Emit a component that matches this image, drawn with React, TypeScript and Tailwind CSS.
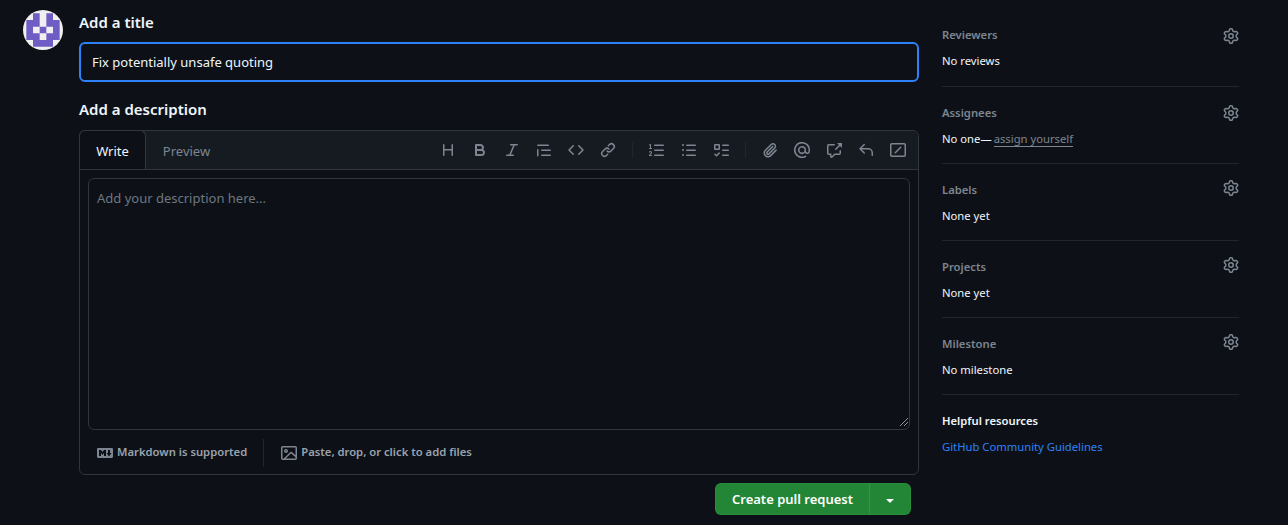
const OCTICONS: Record<string, string> = {
	heading: "M3.75 2a.75.75 0 0 1 .75.75V7h7V2.75a.75.75 0 0 1 1.5 0v10.5a.75.75 0 0 1-1.5 0V8.5h-7v4.75a.75.75 0 0 1-1.5 0V2.75A.75.75 0 0 1 3.75 2Z",
	bold: "M4 2h4.5a3.501 3.501 0 0 1 2.852 5.53A3.499 3.499 0 0 1 9.5 14H4a1 1 0 0 1-1-1V3a1 1 0 0 1 1-1Zm1 7v3h4.5a1.5 1.5 0 0 0 0-3Zm3.5-2a1.5 1.5 0 0 0 0-3H5v3Z",
	italic: "M6 2.75A.75.75 0 0 1 6.75 2h6.5a.75.75 0 0 1 0 1.5h-2.505l-3.858 9H9.25a.75.75 0 0 1 0 1.5h-6.5a.75.75 0 0 1 0-1.5h2.505l3.858-9H6.75A.75.75 0 0 1 6 2.75Z",
	quote: "M1.75 2.5h10.5a.75.75 0 0 1 0 1.5H1.75a.75.75 0 0 1 0-1.5Zm4 5h8.5a.75.75 0 0 1 0 1.5h-8.5a.75.75 0 0 1 0-1.5Zm0 5h8.5a.75.75 0 0 1 0 1.5h-8.5a.75.75 0 0 1 0-1.5ZM2.5 7.75v6a.75.75 0 0 1-1.5 0v-6a.75.75 0 0 1 1.5 0Z",
	code: "m11.28 3.22 4.25 4.25a.75.75 0 0 1 0 1.06l-4.25 4.25a.749.749 0 0 1-1.275-.326.749.749 0 0 1 .215-.734L13.94 8l-3.72-3.72a.749.749 0 0 1 .326-1.275.749.749 0 0 1 .734.215Zm-6.56 0a.751.751 0 0 1 1.042.018.751.751 0 0 1 .018 1.042L2.06 8l3.72 3.72a.749.749 0 0 1-.326 1.275.749.749 0 0 1-.734-.215L.47 8.53a.75.75 0 0 1 0-1.06Z",
	link: "m7.775 3.275 1.25-1.25a3.5 3.5 0 1 1 4.95 4.95l-2.5 2.5a3.5 3.5 0 0 1-4.95 0 .751.751 0 0 1 .018-1.042.751.751 0 0 1 1.042-.018 1.998 1.998 0 0 0 2.83 0l2.5-2.5a2.002 2.002 0 0 0-2.83-2.83l-1.25 1.25a.751.751 0 0 1-1.042-.018.751.751 0 0 1-.018-1.042Zm-4.69 9.64a1.998 1.998 0 0 0 2.83 0l1.25-1.25a.751.751 0 0 1 1.042.018.751.751 0 0 1 .018 1.042l-1.25 1.25a3.5 3.5 0 1 1-4.95-4.95l2.5-2.5a3.5 3.5 0 0 1 4.95 0 .751.751 0 0 1-.018 1.042.751.751 0 0 1-1.042.018 1.998 1.998 0 0 0-2.83 0l-2.5 2.5a1.998 1.998 0 0 0 0 2.83Z",
	listOrdered: "M5 3.25a.75.75 0 0 1 .75-.75h8.5a.75.75 0 0 1 0 1.5h-8.5A.75.75 0 0 1 5 3.25Zm0 5a.75.75 0 0 1 .75-.75h8.5a.75.75 0 0 1 0 1.5h-8.5A.75.75 0 0 1 5 8.25Zm0 5a.75.75 0 0 1 .75-.75h8.5a.75.75 0 0 1 0 1.5h-8.5a.75.75 0 0 1-.75-.75ZM2.003 2.5a.5.5 0 0 0-.723-.447l-1.003.5a.5.5 0 0 0 .446.895l.28-.14V6H.5a.5.5 0 0 0 0 1h2.006a.5.5 0 1 0 0-1h-.503ZM.924 10.32a.5.5 0 0 1-.851-.525l.001-.001.001-.002.002-.004.007-.011c.097-.144.215-.273.348-.384.228-.19.588-.392 1.068-.392.468 0 .858.181 1.126.484.259.294.377.673.377 1.038 0 .987-.686 1.495-1.156 1.845l-.047.035c-.303.225-.522.4-.654.597h1.357a.5.5 0 0 1 0 1H.5a.5.5 0 0 1-.5-.5c0-1.005.692-1.52 1.167-1.875l.035-.025c.531-.396.8-.625.8-1.078a.57.57 0 0 0-.128-.376C1.806 10.068 1.695 10 1.5 10a.658.658 0 0 0-.429.163.835.835 0 0 0-.144.153Z",
	listUnordered: "M5.75 2.5h8.5a.75.75 0 0 1 0 1.5h-8.5a.75.75 0 0 1 0-1.5Zm0 5h8.5a.75.75 0 0 1 0 1.5h-8.5a.75.75 0 0 1 0-1.5Zm0 5h8.5a.75.75 0 0 1 0 1.5h-8.5a.75.75 0 0 1 0-1.5ZM2 14a1 1 0 1 1 0-2 1 1 0 0 1 0 2Zm1-6a1 1 0 1 1-2 0 1 1 0 0 1 2 0ZM2 4a1 1 0 1 1 0-2 1 1 0 0 1 0 2Z",
	tasklist: "M2 2h4a1 1 0 0 1 1 1v4a1 1 0 0 1-1 1H2a1 1 0 0 1-1-1V3a1 1 0 0 1 1-1Zm4.655 8.595a.75.75 0 0 1 0 1.06L4.03 14.28a.75.75 0 0 1-1.06 0l-1.5-1.5a.749.749 0 0 1 .326-1.275.749.749 0 0 1 .734.215l.97.97 2.095-2.095a.75.75 0 0 1 1.06 0ZM9.75 2.5h5.5a.75.75 0 0 1 0 1.5h-5.5a.75.75 0 0 1 0-1.5Zm0 5h5.5a.75.75 0 0 1 0 1.5h-5.5a.75.75 0 0 1 0-1.5Zm0 5h5.5a.75.75 0 0 1 0 1.5h-5.5a.75.75 0 0 1 0-1.5Zm-7.25-9v3h3v-3Z",
	paperclip: "M12.212 3.02a1.753 1.753 0 0 0-2.478.003l-5.83 5.83a3.007 3.007 0 0 0-.88 2.127c0 .795.315 1.551.88 2.116.567.567 1.333.89 2.126.89.79 0 1.548-.321 2.116-.89l5.48-5.48a.75.75 0 0 1 1.061 1.06l-5.48 5.48a4.492 4.492 0 0 1-3.177 1.33c-1.2 0-2.345-.487-3.187-1.33a4.483 4.483 0 0 1-1.32-3.177c0-1.195.475-2.341 1.32-3.186l5.83-5.83a3.25 3.25 0 0 1 5.553 2.297c0 .863-.343 1.691-.953 2.301L7.439 12.39c-.375.377-.884.59-1.416.593a1.998 1.998 0 0 1-1.412-.593 1.992 1.992 0 0 1 0-2.828l5.48-5.48a.751.751 0 0 1 1.042.018.751.751 0 0 1 .018 1.042l-5.48 5.48a.492.492 0 0 0 0 .707.499.499 0 0 0 .352.154.51.51 0 0 0 .356-.154l5.833-5.827a1.755 1.755 0 0 0 0-2.481Z",
	mention: "M4.75 2.37a6.501 6.501 0 0 0 6.5 11.26.75.75 0 0 1 .75 1.298A7.999 7.999 0 0 1 .989 4.148 8 8 0 0 1 16 7.75v1.5a2.75 2.75 0 0 1-5.072 1.475 3.999 3.999 0 0 1-6.65-4.19A4 4 0 0 1 12 8v1.25a1.25 1.25 0 0 0 2.5 0V7.867a6.5 6.5 0 0 0-9.75-5.496ZM10.5 8a2.5 2.5 0 1 0-5 0 2.5 2.5 0 0 0 5 0Z",
	crossReference: "M2.75 3.5a.25.25 0 0 0-.25.25v7.5c0 .138.112.25.25.25h2a.75.75 0 0 1 .75.75v2.19l2.72-2.72a.749.749 0 0 1 .53-.22h4.5a.25.25 0 0 0 .25-.25v-2.5a.75.75 0 0 1 1.5 0v2.5A1.75 1.75 0 0 1 13.25 13H9.06l-2.573 2.573A1.458 1.458 0 0 1 4 14.543V13H2.75A1.75 1.75 0 0 1 1 11.25v-7.5C1 2.784 1.784 2 2.75 2h5.5a.75.75 0 0 1 0 1.5ZM16 1.25v4.146a.25.25 0 0 1-.427.177L14.03 4.03l-3.75 3.75a.749.749 0 0 1-1.275-.326.749.749 0 0 1 .215-.734l3.75-3.75-1.543-1.543A.25.25 0 0 1 11.604 1h4.146a.25.25 0 0 1 .25.25Z",
	reply: "M6.78 1.97a.75.75 0 0 1 0 1.06L3.81 6h6.44A4.75 4.75 0 0 1 15 10.75v2.5a.75.75 0 0 1-1.5 0v-2.5a3.25 3.25 0 0 0-3.25-3.25H3.81l2.97 2.97a.749.749 0 0 1-.326 1.275.749.749 0 0 1-.734-.215L1.47 7.28a.75.75 0 0 1 0-1.06l4.25-4.25a.75.75 0 0 1 1.06 0Z",
	slashBox: "M1.75 1h12.5c.966 0 1.75.784 1.75 1.75v10.5A1.75 1.75 0 0 1 14.25 15H1.75A1.75 1.75 0 0 1 0 13.25V2.75C0 1.784.784 1 1.75 1Zm0 1.5a.25.25 0 0 0-.25.25v10.5c0 .138.112.25.25.25h12.5a.25.25 0 0 0 .25-.25V2.75a.25.25 0 0 0-.25-.25ZM11.28 5.78a.75.75 0 0 0-1.06-1.06l-5.5 5.5a.75.75 0 1 0 1.06 1.06Z",
	gear: "M8 0a8.2 8.2 0 0 1 .701.031C9.444.095 9.99.645 10.16 1.29l.288 1.107c.018.066.079.158.212.224.231.114.454.243.668.386.123.082.233.09.299.071l1.103-.303c.644-.176 1.392.021 1.82.63.27.385.506.792.704 1.218.315.675.111 1.422-.364 1.891l-.814.806c-.049.048-.098.147-.088.294.016.257.016.515 0 .772-.01.147.038.246.088.294l.814.806c.475.469.679 1.216.364 1.891a7.977 7.977 0 0 1-.704 1.217c-.428.61-1.176.807-1.82.63l-1.102-.302c-.067-.019-.177-.011-.3.071a5.909 5.909 0 0 1-.668.386c-.133.066-.194.158-.211.224l-.29 1.106c-.168.646-.715 1.196-1.458 1.26a8.006 8.006 0 0 1-1.402 0c-.743-.064-1.289-.614-1.458-1.26l-.289-1.106c-.018-.066-.079-.158-.212-.224a5.738 5.738 0 0 1-.668-.386c-.123-.082-.233-.09-.299-.071l-1.103.303c-.644.176-1.392-.021-1.82-.63a8.12 8.12 0 0 1-.704-1.218c-.315-.675-.111-1.422.363-1.891l.815-.806c.05-.048.098-.147.088-.294a6.214 6.214 0 0 1 0-.772c.01-.147-.038-.246-.088-.294l-.815-.806C.635 6.045.431 5.298.746 4.623a7.92 7.92 0 0 1 .704-1.217c.428-.61 1.176-.807 1.82-.63l1.102.302c.067.019.177.011.3-.071.214-.143.437-.272.668-.386.133-.066.194-.158.211-.224l.29-1.106C6.009.645 6.556.095 7.299.03 7.53.01 7.764 0 8 0Zm-.571 1.525c-.036.003-.108.036-.137.146l-.289 1.105c-.147.561-.549.967-.998 1.189-.173.086-.34.183-.5.29-.417.278-.97.423-1.529.27l-1.103-.303c-.109-.03-.175.016-.195.045-.22.312-.412.644-.573.99-.014.031-.021.11.059.19l.815.806c.411.406.562.957.53 1.456a4.709 4.709 0 0 0 0 .582c.032.499-.119 1.05-.53 1.456l-.815.806c-.081.08-.073.159-.059.19.162.346.353.677.573.989.02.03.085.076.195.046l1.102-.303c.56-.153 1.113-.008 1.53.27.161.107.328.204.501.29.447.222.85.629.997 1.189l.289 1.105c.029.109.101.143.137.146a6.6 6.6 0 0 0 1.142 0c.036-.003.108-.036.137-.146l.289-1.105c.147-.561.549-.967.998-1.189.173-.086.34-.183.5-.29.417-.278.97-.423 1.529-.27l1.103.303c.109.029.175-.016.195-.045.22-.313.411-.644.573-.99.014-.031.021-.11-.059-.19l-.815-.806c-.411-.406-.562-.957-.53-1.456a4.709 4.709 0 0 0 0-.582c-.032-.499.119-1.05.53-1.456l.815-.806c.081-.08.073-.159.059-.19a6.464 6.464 0 0 0-.573-.989c-.02-.03-.085-.076-.195-.046l-1.102.303c-.56.153-1.113.008-1.53-.27a4.44 4.44 0 0 0-.501-.29c-.447-.222-.85-.629-.997-1.189l-.289-1.105c-.029-.11-.101-.143-.137-.146a6.6 6.6 0 0 0-1.142 0ZM11 8a3 3 0 1 1-6 0 3 3 0 0 1 6 0ZM9.5 8a1.5 1.5 0 1 0-3.001.001A1.5 1.5 0 0 0 9.5 8Z",
	image: "M16 13.25A1.75 1.75 0 0 1 14.25 15H1.75A1.75 1.75 0 0 1 0 13.25V2.75C0 1.784.784 1 1.75 1h12.5c.966 0 1.75.784 1.75 1.75ZM1.75 2.5a.25.25 0 0 0-.25.25v10.5c0 .138.112.25.25.25h.94l.03-.03 6.077-6.078a1.75 1.75 0 0 1 2.412-.06L14.5 10.31V2.75a.25.25 0 0 0-.25-.25Zm12.5 11a.25.25 0 0 0 .25-.25v-.917l-4.298-3.889a.25.25 0 0 0-.344.009L4.81 13.5ZM7 6a2 2 0 1 1-3.999.001A2 2 0 0 1 7 6ZM5.5 6a.5.5 0 1 0-1 0 .5.5 0 0 0 1 0Z",
	markdown: "M14.85 3c.63 0 1.15.52 1.14 1.15v7.7c0 .63-.51 1.15-1.15 1.15H1.15C.52 13 0 12.48 0 11.84V4.15C0 3.52.52 3 1.15 3ZM9 11V5H7L5.5 7 4 5H2v6h2V8l1.5 1.92L7 8v3Zm2.99.5L14.5 8H13V5h-2v3H9.5Z",
	triangleDown: "m4.427 7.427 3.396 3.396a.25.25 0 0 0 .354 0l3.396-3.396A.25.25 0 0 0 11.396 7H4.604a.25.25 0 0 0-.177.427Z",
};

function Octicon({ name, className = "" }: { name: string; className?: string }) {
	return (
		<svg width="16" height="16" viewBox="0 0 16 16" fill="currentColor" className={`shrink-0 ${className}`}>
			<path d={OCTICONS[name]} />
		</svg>
	);
}

const GROUPS = [
	["heading", "bold", "italic", "quote", "code", "link"],
	["listOrdered", "listUnordered", "tasklist"],
	["paperclip", "mention", "crossReference", "reply", "slashBox"],
];

const SECTIONS = [
	{ title: "Reviewers", body: "No reviews", gear: "mt-0.5", pad: "pt-[17px]" },
	{ title: "Assignees", body: "No one—", link: "assign yourself", gear: "mt-0", pad: "pt-[18px]" },
	{ title: "Labels", body: "None yet", gear: "-mt-1", pad: "pt-[18px]" },
	{ title: "Projects", body: "None yet", gear: "-mt-1", pad: "pt-[18px]" },
	{ title: "Milestone", body: "No milestone", gear: "-mt-1", pad: "pt-[18px]" },
];

function Avatar() {
	return (
		<svg width="40" height="40" viewBox="0 0 120 120" className="rounded-full shrink-0">
			<rect width="120" height="120" fill="#f0f0f0" />
			<path
				fill="#6f5cc4"
				d="M30 10h20v20H30ZM70 10h20v20H70ZM10 30h40v20H10ZM70 30h40v20H70ZM10 50h20v20H10ZM90 50h20v20H90ZM50 50h20v20H50ZM10 70h40v20H10ZM70 70h40v20H70ZM30 90h60v20H30Z"
			/>
		</svg>
	);
}

function Main() {
	return (
		<div className="w-[840px] shrink-0">
			<div className="text-[15px] leading-6 font-semibold text-[#f0f6fc]">Add a title</div>
			<div className="mt-2 h-10 rounded-md border-2 border-[#2f81f7] flex items-center pl-[11px] pt-0.5 text-[13px] text-[#f0f6fc]">
				Fix potentially unsafe quoting
			</div>
			<div className="mt-[15px] text-[15px] leading-6 font-semibold text-[#f0f6fc]">Add a description</div>
			<div className="mt-[9px] h-[345px] rounded-md border border-[#30363d] flex flex-col">
				<div className="h-[39px] shrink-0 flex bg-[#161b22] rounded-t-md border-b border-[#30363d]">
					<div className="w-[67px] h-[39px] -mt-px -ml-px flex items-center justify-center pt-1 bg-[#0d1117] border border-b-0 border-[#30363d] rounded-t-md text-[13px] text-[#f0f6fc]">
						Write
					</div>
					<div className="w-[81px] flex items-center justify-center pt-1 text-[13px] text-[#7d8590]">Preview</div>
					<div className="ml-auto flex items-center pr-3 text-[#7d8590]">
						{GROUPS.map((group, gi) => (
							<div key={gi} className={`flex items-center gap-4 ${gi > 0 ? "ml-4 pl-4 border-l border-[#21262d]" : ""}`}>
								{group.map((name) => (
									<Octicon key={name} name={name} />
								))}
							</div>
						))}
					</div>
				</div>
				<div className="flex-1 px-2 pt-2">
					<div className="relative h-[252px] rounded-md border border-[#30363d] px-2 py-[10px] text-[13px] leading-[18px] text-[#6e7681]">
						Add your description here...
						<svg width="10" height="10" viewBox="0 0 10 10" className="absolute right-0 bottom-0.5">
							<path d="M9 1 1 9M9 5 5 9" stroke="#8b949e" strokeWidth="1" />
						</svg>
					</div>
				</div>
				<div className="h-[45px] shrink-0 flex items-center pl-[17px] text-[11.25px] font-semibold text-[#9aa3ad]">
					<Octicon name="markdown" className="text-[#7d8590] mr-1" />
					<span>Markdown is supported</span>
					<div className="h-7 w-px bg-[#21262d] ml-4 mr-[17px]" />
					<Octicon name="image" className="text-[#7d8590] mr-1" />
					<span>Paste, drop, or click to add files</span>
				</div>
			</div>
			<div className="mt-2 flex justify-end pr-2">
				<div className="h-8 w-[196px] flex rounded-md bg-[#238636] border border-[#2e9a40]/40 text-white text-[13px] font-semibold">
					<div className="w-[154px] flex items-center justify-center pt-0.5 border-r border-[#3b9149]">Create pull request</div>
					<div className="flex-1 flex items-center justify-center pt-px">
						<Octicon name="triangleDown" />
					</div>
				</div>
			</div>
		</div>
	);
}

function Sidebar() {
	return (
		<div className="w-[297px] shrink-0 ml-[23px] text-[11.25px]">
			{SECTIONS.map((s) => (
				<div key={s.title} className={`h-[77px] border-b border-[#21262d] ${s.pad}`}>
					<div className="flex items-center justify-between h-4">
						<span className="font-semibold text-[#7d8590]">{s.title}</span>
						<Octicon name="gear" className={`text-[#7d8590] ${s.gear}`} />
					</div>
					<div className="mt-[10px] leading-4 text-[#f0f6fc]">
						{s.body}
						{s.link && <span className="ml-0.5 text-[#7d8590] border-b border-[#7d8590]">{s.link}</span>}
					</div>
				</div>
			))}
			<div className="mt-[18px] leading-4 font-semibold text-[#f0f6fc]">Helpful resources</div>
			<div className="mt-[10px] leading-4 text-[#2f81f7]">GitHub Community Guidelines</div>
		</div>
	);
}

export default function App() {
	return (
		<div className="w-[1288px] h-[525px] overflow-hidden bg-[#0d1117] pl-[23px] pt-[10px] flex font-['Noto_Sans','Liberation_Sans',sans-serif]">
			<Avatar />
			<div className="ml-4 flex">
				<Main />
				<Sidebar />
			</div>
		</div>
	);
}
